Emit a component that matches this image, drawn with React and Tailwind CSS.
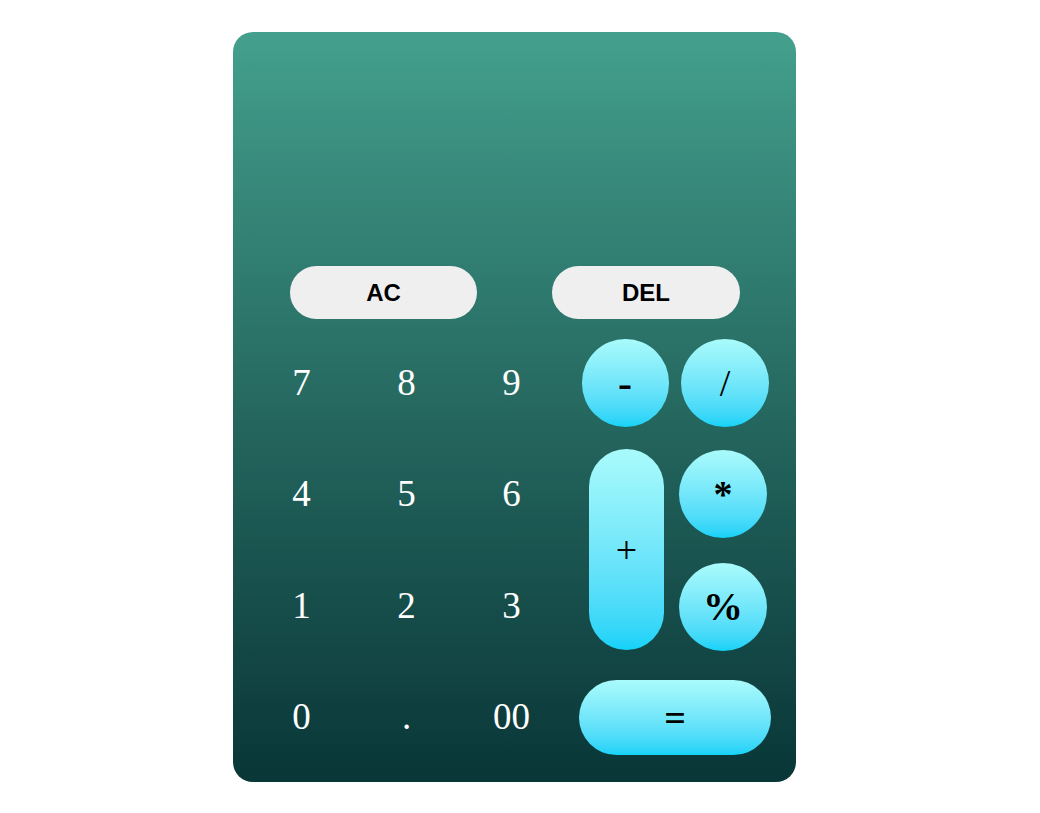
import React, { useState } from 'react';

const serif = { fontFamily: '"Liberation Serif", "Times New Roman", serif' };

const digits = ['7', '8', '9', '4', '5', '6', '1', '2', '3', '0', '.', '00'];

const opBase =
  'flex items-center justify-center bg-gradient-to-b from-[#a9fbfb] to-[#12d2f8] text-black text-[38px] leading-none';

const App = () => {
  const [value, setValue] = useState('');

  const press = (k) => setValue((v) => v + k);

  return (
    <div className="min-h-screen bg-white flex pl-[233px]" style={serif}>
      <div className="mt-[32px] w-[563px] h-[750px] rounded-[20px] bg-gradient-to-b from-[#44a08d] to-[#093637] flex flex-col">
        {/* display */}
        <div className="h-[234px] px-6 flex items-end justify-end text-white text-[36px]">{value}</div>

        <div className="flex pl-[57px] gap-[75px]">
          <button
            onClick={() => setValue('')}
            className="w-[187px] h-[53px] rounded-full bg-[#efefef] text-black font-bold text-[24px] font-['Liberation_Sans',Arial,sans-serif]"
          >
            AC
          </button>
          <button
            onClick={() => setValue((v) => v.slice(0, -1))}
            className="w-[188px] h-[53px] rounded-full bg-[#efefef] text-black font-bold text-[24px] font-['Liberation_Sans',Arial,sans-serif]"
          >
            DEL
          </button>
        </div>

        <div className="flex mt-[8px] pl-[16px] gap-[11px]">
          <div className="grid grid-cols-[105px_105px_105px] grid-rows-[repeat(4,111.3px)]">
            {digits.map((d) => (
              <button
                key={d}
                onClick={() => press(d)}
                className="flex items-center justify-center text-white text-[37px] leading-none"
              >
                {d}
              </button>
            ))}
          </div>

          <div className="grid grid-cols-[100px_100px] grid-rows-[repeat(4,111.3px)] place-items-center">
            <button onClick={() => press('-')} className={`${opBase} w-[87px] h-[88px] rounded-full font-bold text-[42px]`}>
              -
            </button>
            <button onClick={() => press('/')} className={`${opBase} w-[88px] h-[88px] rounded-full`}>
              /
            </button>
            <button
              onClick={() => press('+')}
              className={`${opBase} row-span-2 w-[75px] h-[201px] rounded-full ml-[3px]`}
            >
              +
            </button>
            <button onClick={() => press('*')} className={`${opBase} w-[88px] h-[88px] rounded-full font-bold mr-[4px] text-[28px]`}>
              *
            </button>
            <button onClick={() => press('%')} className={`${opBase} w-[88px] h-[88px] rounded-full font-bold mr-[4px] mt-[3px] text-[40px]`}>
              %
            </button>
            <button onClick={() => setValue('')} className={`${opBase} col-span-2 w-[192px] h-[75px] rounded-full font-bold mt-[2px]`}>
              =
            </button>
          </div>
        </div>
      </div>
    </div>
  );
};

export default App;
